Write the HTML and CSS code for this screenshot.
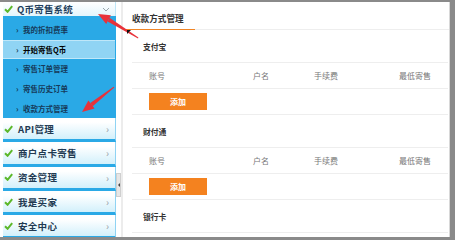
FILE: index.html
```html
<!DOCTYPE html>
<html lang="zh-CN">
<head>
<meta charset="utf-8">
<title>收款方式管理</title>
<link rel="stylesheet" href="styles.css">
</head>
<body>
<div class="frame">
  <aside class="sidebar">
    <div class="sys-head">
      <svg class="check" viewBox="0 0 9 8" width="9" height="8"><path d="M1 4.2 L3.6 6.8 L8.2 1.2" fill="none" stroke="#5cb82a" stroke-width="2"/></svg>
      <span class="sys-title">Q币寄售系统</span>
      <svg class="chev-down" viewBox="0 0 8 5" width="8" height="5"><polyline points="1,1 4,4 7,1" fill="none" stroke="#9aa4aa" stroke-width="1"/></svg>
    </div>
    <ul class="submenu">
      <li class="sub-item"><span class="sub-arrow">›</span>我的折扣费率</li>
      <li class="sub-item active"><span class="sub-arrow">›</span>开始寄售Q币</li>
      <li class="sub-item"><span class="sub-arrow">›</span>寄售订单管理</li>
      <li class="sub-item"><span class="sub-arrow">›</span>寄售历史订单</li>
      <li class="sub-item"><span class="sub-arrow">›</span>收款方式管理</li>
    </ul>
    <ul class="menu">
      <li class="menu-item"><svg class="check" viewBox="0 0 9 8" width="9" height="8"><path d="M1 4.2 L3.6 6.8 L8.2 1.2" fill="none" stroke="#5cb82a" stroke-width="2"/></svg><span class="menu-label">API管理</span><span class="menu-arrow">›</span></li>
      <li class="menu-item"><svg class="check" viewBox="0 0 9 8" width="9" height="8"><path d="M1 4.2 L3.6 6.8 L8.2 1.2" fill="none" stroke="#5cb82a" stroke-width="2"/></svg><span class="menu-label">商户点卡寄售</span><span class="menu-arrow">›</span></li>
      <li class="menu-item"><svg class="check" viewBox="0 0 9 8" width="9" height="8"><path d="M1 4.2 L3.6 6.8 L8.2 1.2" fill="none" stroke="#5cb82a" stroke-width="2"/></svg><span class="menu-label">资金管理</span><span class="menu-arrow">›</span></li>
      <li class="menu-item"><svg class="check" viewBox="0 0 9 8" width="9" height="8"><path d="M1 4.2 L3.6 6.8 L8.2 1.2" fill="none" stroke="#5cb82a" stroke-width="2"/></svg><span class="menu-label">我是买家</span><span class="menu-arrow">›</span></li>
      <li class="menu-item"><svg class="check" viewBox="0 0 9 8" width="9" height="8"><path d="M1 4.2 L3.6 6.8 L8.2 1.2" fill="none" stroke="#5cb82a" stroke-width="2"/></svg><span class="menu-label">安全中心</span><span class="menu-arrow">›</span></li>
    </ul>
  </aside>
  <div class="gutter">
    <div class="handle"><span class="handle-tri"></span></div>
  </div>
  <main class="content">
    <div class="tabs"><div class="tab">收款方式管理</div></div>
    <section class="pay">
      <div class="pay-title">支付宝</div>
      <div class="pay-head"><span>账号</span><span>户名</span><span>手续费</span><span>最低寄售</span></div>
      <div class="pay-actions"><button class="btn-add">添加</button></div>
    </section>
    <section class="pay">
      <div class="pay-title">财付通</div>
      <div class="pay-head"><span>账号</span><span>户名</span><span>手续费</span><span>最低寄售</span></div>
      <div class="pay-actions"><button class="btn-add">添加</button></div>
    </section>
    <section class="pay">
      <div class="pay-title">银行卡</div>
    </section>
  </main>
</div>
<svg class="annotations" viewBox="0 0 455 240" width="455" height="240">
  <polygon points="98,14 110.9,15.2 106.2,24" fill="#e8323a"/>
  <polygon points="109.5,17.8 107.7,21.4 138,38.6 138.4,37.6" fill="#e8323a"/>
  <polygon points="82,112 88.4,100.6 94.6,108.5" fill="#e8323a"/>
  <polygon points="90.3,103 92.7,106.2 114.3,87.6 113.6,86.8" fill="#e8323a"/>
  <polygon points="127,30 131,30 127,34" fill="#111"/>
</svg>
</body>
</html>
```

FILE: styles.css
```css
* { box-sizing: border-box; }
html, body { margin: 0; padding: 0; }
body {
  width: 455px;
  height: 240px;
  overflow: hidden;
  background: #8a8a8a;
  font-family: "Noto Sans CJK SC", "Noto Sans", sans-serif;
  position: relative;
}
ul { list-style: none; margin: 0; padding: 0; }

.frame {
  margin: 2px 5px 0 0;
  height: 235px;
  background: #fff;
  border-right: 1px solid #d8d8d8;
  display: flex;
  overflow: hidden;
}

/* sidebar */
.sidebar {
  width: 116px;
  flex: none;
  padding-left: 3px;
  background: #fff;
  display: flex;
  flex-direction: column;
}
.sys-head {
  height: 18px;
  display: flex;
  align-items: center;
  padding-left: 1px;
  background: linear-gradient(#ffffff, #e4f5fc);
  border-right: 1px solid #bfe6f7;
}
.check { flex: none; display: block; }
.sys-title {
  margin-left: 4px;
  font-size: 9.5px;
  font-weight: 700;
  color: #1f3f5c;
  letter-spacing: 0.2px;
}
.chev-down { margin-left: auto; margin-right: 5px; }

.submenu {
  background: #2aa9e6;
  padding-top: 4px;
  height: 102px;
  border-right: 1px solid #2aa9e6;
}
.sub-item {
  height: 19.6px;
  display: flex;
  align-items: center;
  padding-left: 13px;
  font-size: 7.5px;
  font-weight: 700;
  color: #163a5a;
}
.sub-item.active {
  background: #90d4f4;
  color: #000;
  border-top: 1px solid #bfe7f9;
  border-bottom: 1px solid #bfe7f9;
}
.sub-arrow {
  font-size: 8px;
  width: 7px;
  color: #163a5a;
}

.menu-item {
  height: 24.3px;
  display: flex;
  align-items: center;
  padding-left: 1px;
  background: linear-gradient(#ffffff 20%, #d2f0fb);
  border-bottom: 3px solid #2aa9e6;
  border-right: 1px solid #8fd3f3;
}
.menu-label {
  margin-left: 5px;
  font-size: 9.5px;
  font-weight: 700;
  color: #223a52;
  letter-spacing: 0.3px;
}
.menu-arrow {
  margin-left: auto;
  margin-right: 6px;
  font-size: 10px;
  color: #9aa0a6;
}

/* gutter with collapse handle */
.gutter {
  width: 7px;
  flex: none;
  padding-top: 171px;
  border-right: 2px solid #ececec;
}
.handle {
  width: 5px;
  height: 24px;
  background: #e6e6e6;
  border: 1px solid #cfcfcf;
  display: flex;
  align-items: center;
  justify-content: center;
}
.handle-tri {
  width: 0;
  height: 0;
  border-top: 2px solid transparent;
  border-bottom: 2px solid transparent;
  border-right: 2px solid #444;
}

/* content */
.content {
  flex: 1;
  min-width: 0;
  display: flex;
  flex-direction: column;
}
.tabs {
  height: 28px;
  border-bottom: 1px solid #eeeeee;
  display: flex;
  align-items: flex-end;
}
.tab {
  width: 72px;
  height: 28px;
  padding-left: 9px;
  padding-bottom: 5px;
  margin-bottom: -1px;
  border-bottom: 1px solid #f08526;
  display: flex;
  align-items: flex-end;
  font-size: 8.6px;
  font-weight: 700;
  color: #333;
}
.pay { margin: 0 1px 0 9px; }
.pay-title {
  height: 33px;
  border-bottom: 1px solid #eeeeee;
  display: flex;
  align-items: center;
  padding-left: 11px;
  font-size: 7.8px;
  font-weight: 700;
  color: #333;
}
.pay-head {
  height: 26px;
  border-bottom: 1px solid #eeeeee;
  display: grid;
  grid-template-columns: 104px 61px 85px 1fr;
  align-items: center;
  padding-left: 17px;
  font-size: 8px;
  color: #777;
}
.pay-actions {
  height: 26px;
  border-bottom: 1px solid #eeeeee;
  padding: 4px 0 0 17px;
}
.btn-add {
  display: block;
  width: 58px;
  height: 17px;
  border: 0;
  padding: 0;
  background: #f4821f;
  color: #fff;
  font-family: inherit;
  font-size: 8px;
  font-weight: 700;
}

.annotations {
  position: absolute;
  left: 0;
  top: 0;
  pointer-events: none;
}
```
